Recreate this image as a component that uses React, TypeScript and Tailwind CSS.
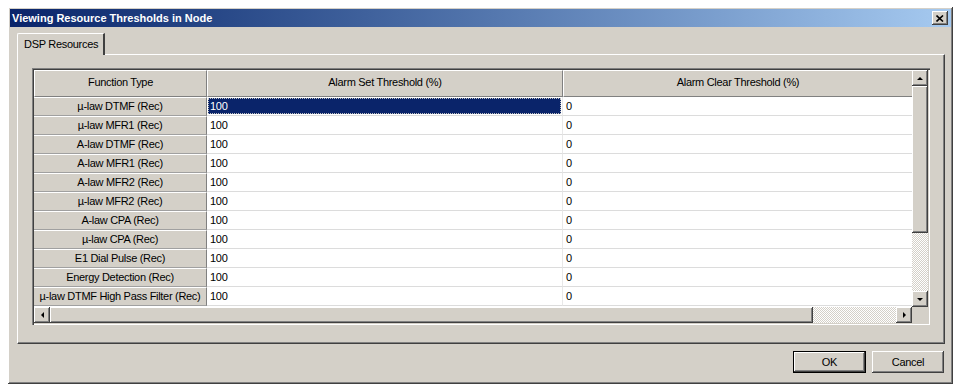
const rows = [
  "µ-law DTMF (Rec)",
  "µ-law MFR1 (Rec)",
  "A-law DTMF (Rec)",
  "A-law MFR1 (Rec)",
  "A-law MFR2 (Rec)",
  "µ-law MFR2 (Rec)",
  "A-law CPA (Rec)",
  "µ-law CPA (Rec)",
  "E1 Dial Pulse (Rec)",
  "Energy Detection (Rec)",
  "µ-law DTMF High Pass Filter (Rec)",
];

// win2k style 3d edges
const raised =
  "shadow-[inset_-1px_-1px_#404040,inset_1px_1px_#ffffff,inset_-2px_-2px_#808080,inset_2px_2px_#d4d0c8]";
const checker =
  "bg-[repeating-conic-gradient(#ffffff_0%_25%,#d4d0c8_0%_50%)] bg-[length:2px_2px]";

function Arrow({ dir }: { dir: "up" | "down" | "left" | "right" }) {
  const pts = {
    up: "4,1 7,4 1,4",
    down: "1,1 7,1 4,4",
    left: "4,1 4,7 1,4",
    right: "1,1 4,4 1,7",
  }[dir];
  const size = dir === "up" || dir === "down" ? { w: 8, h: 5 } : { w: 5, h: 8 };
  return (
    <svg width={size.w} height={size.h} viewBox={`0 0 ${size.w} ${size.h}`}>
      <polygon points={pts} fill="#000" />
    </svg>
  );
}

function ScrollButton({ dir }: { dir: "up" | "down" | "left" | "right" }) {
  return (
    <div className={`w-[16px] h-[16px] shrink-0 bg-[#d4d0c8] flex items-center justify-center ${raised}`}>
      <Arrow dir={dir} />
    </div>
  );
}

export default function App() {
  return (
    <div className="w-[961px] h-[390px] bg-white overflow-hidden font-['Liberation_Sans',Arial,sans-serif] text-[11px] tracking-[-0.3px] text-black">
      <div
        className={`ml-[8px] mt-[7px] w-[945px] h-[377px] bg-[#d4d0c8] p-[2px] flex flex-col ${raised}`}
      >
        {/* title bar */}
        <div className="h-[18px] shrink-0 flex items-center justify-between bg-gradient-to-r from-[#0a246a] to-[#a6caf0] pl-[2px] pr-[3px]">
          <span className="text-white font-bold text-[11px] tracking-normal">
            Viewing Resource Thresholds in Node
          </span>
          <div className={`w-[16px] h-[14px] bg-[#d4d0c8] flex items-center justify-center ${raised}`}>
            <svg width="8" height="7" viewBox="0 0 8 7">
              <path d="M0.5 0.5 L7 6.5 M7 0.5 L0.5 6.5" stroke="#000" strokeWidth="1.6" />
            </svg>
          </div>
        </div>

        {/* body */}
        <div className="flex-1 flex flex-col pl-[7px] pr-[6px] pt-[6px]">
          {/* tab strip */}
          <div className="h-[22px] flex items-end relative z-10">
            <div className="h-[22px] w-[88px] bg-[#d4d0c8] border-t border-l border-white border-r-2 border-r-[#404040] rounded-tl-[2px] flex items-center pl-[6px]">
              DSP Resources
            </div>
          </div>

          {/* tab panel */}
          <div className="h-[290px] w-[928px] -mt-px border border-t-white border-l-white border-r-[#404040] border-b-[#404040] shadow-[inset_-1px_-1px_#808080] pl-[14px] pt-[13px]">
            {/* grid */}
            <div className="w-[898px] h-[257px] p-[2px] bg-[#d4d0c8] flex flex-col shadow-[inset_1px_1px_#808080,inset_2px_2px_#404040,inset_-1px_-1px_#ffffff,inset_-2px_-2px_#d4d0c8]">
              <div className="flex flex-1 min-h-0">
                <div className="flex-1 flex flex-col bg-white">
                  {/* header */}
                  <div className="h-[27px] flex bg-[#d4d0c8]">
                    <div className="w-[173px] text-center pt-[3px] border-t border-l border-white border-r border-r-[#808080] border-b border-b-[#808080]">
                      Function Type
                    </div>
                    <div className="w-[356px] text-center pt-[3px] border-t border-l border-white border-r border-r-[#808080] border-b border-b-[#808080]">
                      Alarm Set Threshold (%)
                    </div>
                    <div className="flex-1 text-center pt-[3px] border-t border-l border-white border-b border-b-[#808080]">
                      Alarm Clear Threshold (%)
                    </div>
                  </div>
                  {/* rows */}
                  {rows.map((name, i) => (
                    <div key={name} className="h-[19px] flex">
                      <div className="w-[173px] bg-[#d4d0c8] text-center leading-[17px] border-t border-white border-b border-b-[#a0a0a0] border-r border-r-[#808080] whitespace-nowrap">
                        {name}
                      </div>
                      <div className="w-[356px] border-b border-[#dcdcdc] border-r border-r-[#e8e8e8] p-px">
                        {i === 0 ? (
                          <div className="h-full bg-[#0a246a] text-white pl-[2px] leading-[17px] outline outline-1 outline-dotted outline-[#c0c0c0] -outline-offset-1">
                            100
                          </div>
                        ) : (
                          <div className="pl-[2px] leading-[17px]">100</div>
                        )}
                      </div>
                      <div className="flex-1 border-b border-[#dcdcdc] pl-[3px] pt-px leading-[17px]">0</div>
                    </div>
                  ))}
                  <div className="flex-1 bg-white" />
                </div>

                {/* vertical scrollbar */}
                <div className="w-[16px] flex flex-col">
                  <ScrollButton dir="up" />
                  <div className={`h-[147px] bg-[#d4d0c8] ${raised}`} />
                  <div className={`flex-1 ${checker}`} />
                  <ScrollButton dir="down" />
                </div>
              </div>

              {/* horizontal scrollbar */}
              <div className="h-[16px] flex">
                <ScrollButton dir="left" />
                <div className={`w-[763px] bg-[#d4d0c8] ${raised}`} />
                <div className={`flex-1 ${checker}`} />
                <ScrollButton dir="right" />
                <div className="w-[16px] bg-[#d4d0c8]" />
              </div>
            </div>
          </div>

          {/* buttons */}
          <div className="flex justify-end gap-[6px] pt-[7px] pr-px">
            <div className="w-[73px] h-[22px] border border-black">
              <div className={`h-full bg-[#d4d0c8] flex items-center justify-center ${raised}`}>OK</div>
            </div>
            <div className={`w-[72px] h-[22px] bg-[#d4d0c8] flex items-center justify-center ${raised}`}>
              Cancel
            </div>
          </div>
        </div>
      </div>
    </div>
  );
}
